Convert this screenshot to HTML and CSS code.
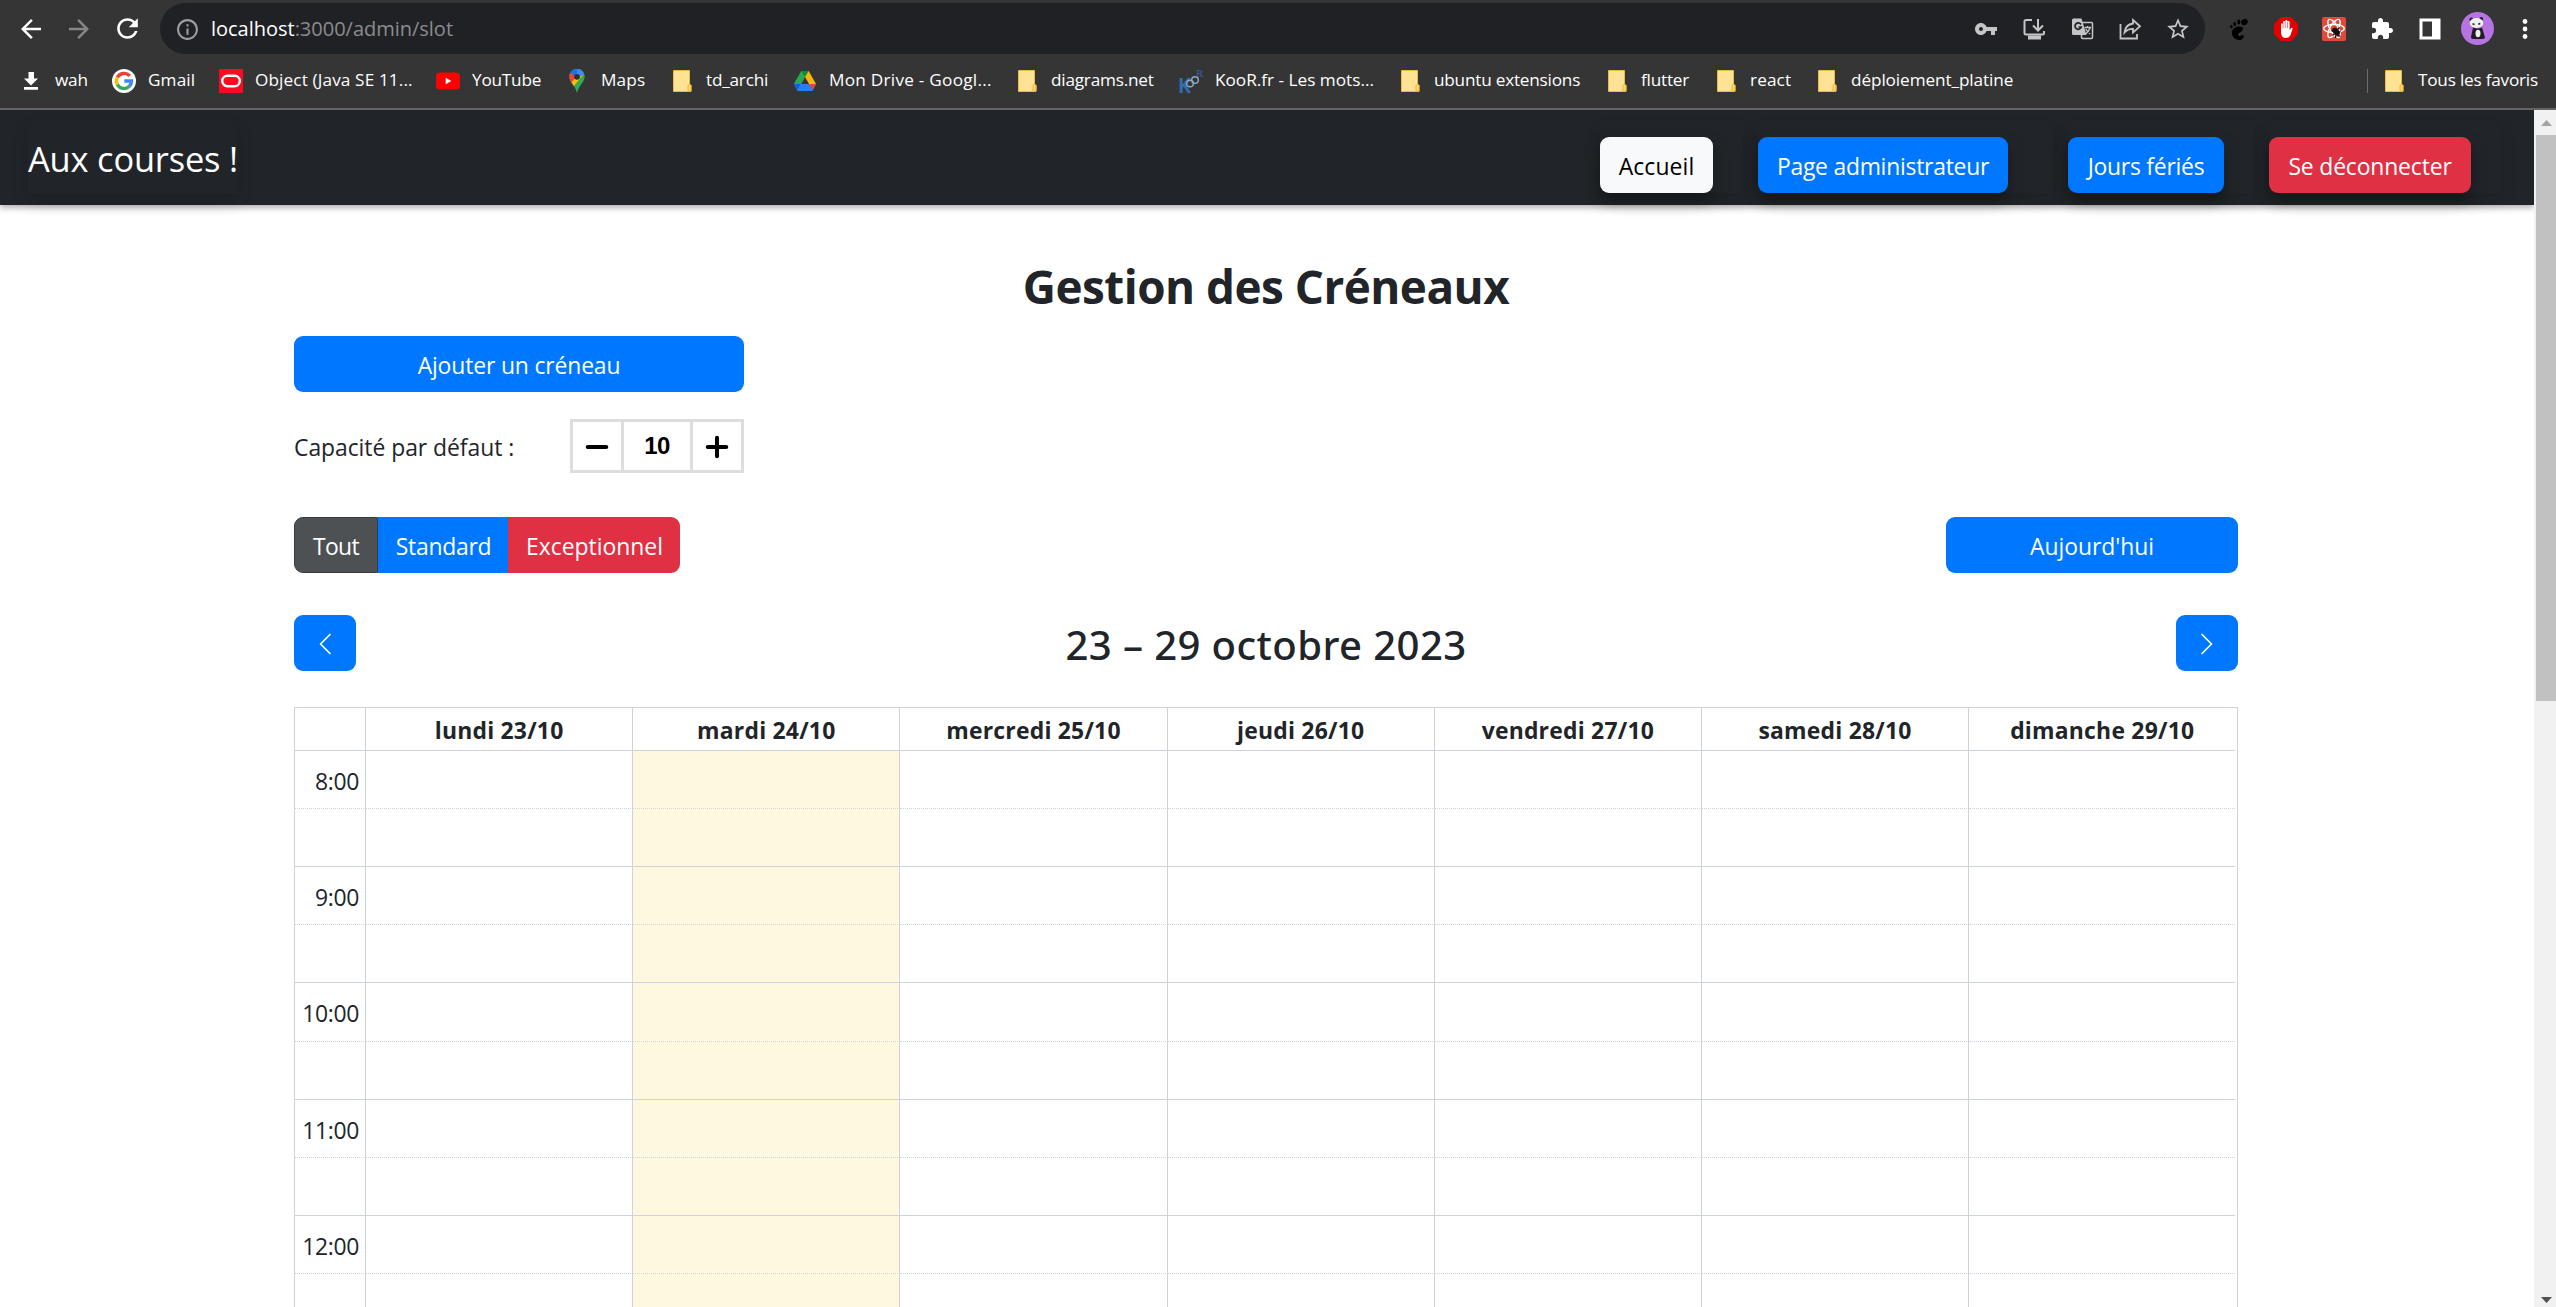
FILE: index.html
```html
<!DOCTYPE html>
<html lang="fr">
<head>
<meta charset="utf-8">
<title>Gestion des Créneaux</title>
<link rel="stylesheet" href="styles.css">
</head>
<body>
<svg class="defs" width="0" height="0">
  <symbol id="folder" viewBox="0 0 24 24">
    <path d="M3.500 1.500h16v14.500h1.500v6.500h-17.500z" fill="#ffe294" stroke="#e9bd43"/>
    <path d="M18 22v-5q0-1.500 1.500-1.500t1.500 1.500v5z" fill="#ffd868" stroke="#e9b93c"/>
  </symbol>
</svg>
<header class="browser">
  <div class="toolbar">
    <div class="nav-icons">
      <svg width="30" height="30" viewBox="0 0 24 24" fill="#fff"><path d="M20 11H7.830l5.590-5.590L12 4l-8 8 8 8 1.410-1.410L7.830 13H20v-2z"/></svg>
      <svg width="30" height="30" viewBox="0 0 24 24" fill="#868686"><path d="M4 11h12.170l-5.590-5.590L12 4l8 8-8 8-1.410-1.410L16.170 13H4v-2z"/></svg>
      <svg width="31" height="31" viewBox="0 0 24 24" fill="#fff"><path d="M17.650 6.350C16.200 4.900 14.210 4 12 4c-4.420 0-7.990 3.580-7.990 8s3.570 8 7.990 8c3.730 0 6.840-2.550 7.730-6h-2.080c-.820 2.330-3.040 4-5.650 4-3.310 0-6-2.690-6-6s2.690-6 6-6c1.660 0 3.140.690 4.220 1.780L13 11h7V4l-2.350 2.350z"/></svg>
    </div>
    <div class="omnibox">
      <svg class="info" width="25" height="25" viewBox="0 0 24 24" fill="#9aa0a6"><path d="M11 7h2v2h-2zm0 4h2v6h-2zm1-9C6.480 2 2 6.480 2 12s4.480 10 10 10 10-4.480 10-10S17.520 2 12 2zm0 18c-4.410 0-8-3.590-8-8s3.590-8 8-8 8 3.590 8 8-3.590 8-8 8z"/></svg>
      <div class="url"><b>localhost</b>:3000/admin/slot</div>
      <div class="omni-icons">
        <svg viewBox="0 0 24 24" fill="#c4c5c6"><path d="M12.650 10C11.830 7.670 9.610 6 7 6c-3.310 0-6 2.690-6 6s2.690 6 6 6c2.610 0 4.830-1.670 5.650-4H17v4h4v-4h2v-4H12.650zM7 14c-1.100 0-2-.900-2-2s.900-2 2-2 2 .900 2 2-.900 2-2 2z"/></svg>
        <svg viewBox="0 0 24 24" fill="none" stroke="#c4c5c6" stroke-width="2"><path d="M10 3H4a1.500 1.500 0 0 0-1.500 1.500v11.500A1.500 1.500 0 0 0 4 17.500h16.500a1.500 1.500 0 0 0 1.500-1.500V14"/><path d="M16 2v11M11 8.500l5 5 5-5"/><path d="M6 20.500h13" stroke-width="4"/></svg>
        <svg viewBox="0 0 24 24"><rect x="11.500" y="5.500" width="11" height="16" rx="1" fill="none" stroke="#c4c5c6" stroke-width="1.500"/><path d="M3.500 1.500h8L16.500 18H3.500a1.500 1.500 0 0 1-1.500-1.500V3a1.500 1.500 0 0 1 1.500-1.500z" fill="#c4c5c6"/><path d="M11 7.500A3.200 3.200 0 1 0 11.300 10H8.500" fill="none" stroke="#202124" stroke-width="1.700"/><path d="M14.500 10.500h6.500M17.500 9v1.500M20 11q-1.500 4-4.500 6M15.800 12q1.700 3.500 4.500 5" fill="none" stroke="#c4c5c6" stroke-width="1.400"/></svg>
        <svg viewBox="0 0 24 24" fill="none" stroke="#c4c5c6" stroke-width="2"><path d="M2.500 7v14.500H19V17" stroke-width="1.800"/><path d="M15 3l7 6.300-7 6.200v-3.700c-4 0-6.500 1.200-8.500 3.700.500-5 3.500-8.300 8.500-9z" stroke-width="1.800"/></svg>
        <svg class="star" viewBox="0 0 24 24" fill="#c4c5c6"><path d="M22 9.240l-7.190-.620L12 2 9.190 8.630 2 9.240l5.460 4.730L5.820 21 12 17.270 18.180 21l-1.630-7.030L22 9.240zM12 15.400l-3.760 2.270 1-4.280-3.320-2.880 4.380-.380L12 6.100l1.710 4.040 4.380.380-3.320 2.880 1 4.280L12 15.400z"/></svg>
      </div>
    </div>
    <div class="ext-icons">
      <svg viewBox="0 0 24 24" fill="#000"><ellipse cx="18.500" cy="5" rx="3.400" ry="2.900" transform="rotate(-35 18.500 5)"/><ellipse cx="12.800" cy="5" rx="1.600" ry="2.400"/><ellipse cx="8.700" cy="7" rx="1.400" ry="2.100" transform="rotate(-10 8.700 7)"/><ellipse cx="5.300" cy="9.700" rx="1.200" ry="1.800" transform="rotate(-20 5.300 9.700)"/><path d="M17 10.500c-5-2.500-11 .500-11 5.500 0 4 3.500 7 7 7 3 0 5-2 5-4.500l-2.500-.500c-1 1.500-3 1.500-3.500 0-.600-2.500 5.500-2.500 5-7.500z"/></svg>
      <svg viewBox="0 0 24 24"><path d="M7 0h10l7 7v10l-7 7H7l-7-7V7z" fill="#e60000"/><path d="M7 16V7.200a1 1 0 0 1 2 0V5a1.100 1.100 0 0 1 2.200 0V4a1.100 1.100 0 0 1 2.200 0v1a1.100 1.100 0 0 1 2.200 0v8l1.500-2q1-.800 1.700.200L16.500 18Q15 21 12 21q-4.500 0-5-5z" fill="#fff"/><path d="M9.100 6v5.500M11.300 5v6M13.500 5v6" stroke="#e60000" stroke-width=".5"/></svg>
      <svg viewBox="0 0 24 24"><rect width="24" height="24" rx="2" fill="#e04a3a"/><g fill="none" stroke="#fff" stroke-width="1.400"><ellipse cx="12" cy="11.500" rx="10.200" ry="4"/><ellipse cx="12" cy="11.500" rx="10.200" ry="4" transform="rotate(60 12 11.500)"/><ellipse cx="12" cy="11.500" rx="10.200" ry="4" transform="rotate(120 12 11.500)"/></g><ellipse cx="14" cy="14.500" rx="3" ry="4.500" transform="rotate(-45 14 14.500)" fill="#1c1111"/><path d="M9.500 13.500l4 1 4-4M10.500 18.500l3-2.500 5-1.500M13.500 21l.500-4 4.500 2.500" fill="none" stroke="#1c1111" stroke-width="1.300"/></svg>
      <svg viewBox="0 0 24 24" fill="#fff"><path d="M20.500 11H19V7c0-1.100-.900-2-2-2h-4V3.500C13 2.120 11.880 1 10.500 1S8 2.120 8 3.500V5H4c-1.100 0-1.990.900-1.990 2v3.800H3.500c1.490 0 2.700 1.210 2.700 2.700s-1.210 2.700-2.700 2.700H2V20c0 1.100.900 2 2 2h3.800v-1.500c0-1.490 1.210-2.700 2.700-2.700 1.490 0 2.700 1.210 2.700 2.700V22H17c1.100 0 2-.900 2-2v-4h1.500c1.380 0 2.500-1.120 2.500-2.500S21.880 11 20.500 11z"/></svg>
      <svg viewBox="0 0 24 24"><path d="M1.500 1.500h21v21h-21zM4.500 4.500v15h9.500v-15z" fill="#fff" fill-rule="evenodd"/></svg>
      <svg class="avatar" viewBox="0 0 33 33"><circle cx="16.500" cy="16.500" r="16.500" fill="#b873e2"/><circle cx="10.300" cy="7.500" r="1.900" fill="#222"/><circle cx="20.300" cy="7" r="1.900" fill="#222"/><ellipse cx="15.500" cy="11" rx="6.800" ry="5" fill="#f0f0f0"/><path d="M11.500 11.800l2 .700M17.300 12.300l2-.800" stroke="#222" stroke-width="1.500"/><path d="M12 15.500q4.500 2 9 0l3 10q-1 2-4 1.500h-7q-3 0-3-2z" fill="#1d1d22"/><ellipse cx="17" cy="21.500" rx="2.500" ry="3.700" fill="#f0f0f0"/></svg>
      <svg viewBox="0 0 24 24" fill="#fff"><circle cx="12" cy="4.500" r="2.400"/><circle cx="12" cy="12" r="2.400"/><circle cx="12" cy="19.500" r="2.400"/></svg>
    </div>
  </div>
  <nav class="bookmarks">
    <div class="bm"><svg viewBox="0 0 24 24" fill="#fff"><path d="M9.500 3h5.500v6.500h4L12 16.500 5 9.500h4.500zM5 18h14v2.700H5z"/></svg><span class="tight">wah</span></div>
    <div class="bm"><svg viewBox="0 0 24 24"><circle cx="12" cy="12" r="12" fill="#fff"/><g fill="none" stroke-width="3.400"><path d="M17.700 6.900A7.600 7.600 0 0 0 5.300 8.500" stroke="#ea4335"/><path d="M5.300 8.500a7.600 7.600 0 0 0 0 7" stroke="#fbbc05"/><path d="M5.300 15.500a7.600 7.600 0 0 0 11.800 2.100" stroke="#34a853"/><path d="M17.100 17.600A7.600 7.600 0 0 0 19.500 12H12.300" stroke="#4285f4"/></g></svg><span class="wide">Gmail</span></div>
    <div class="bm"><svg viewBox="0 0 24 24"><rect width="24" height="24" fill="#f80c24"/><rect x="3.200" y="6.800" width="17.600" height="10.400" rx="5.200" fill="none" stroke="#fff" stroke-width="2.400"/></svg><span class="wide">Object (Java SE 11...</span></div>
    <div class="bm"><svg viewBox="0 0 24 24"><rect y="3.600" width="24" height="17" rx="4" fill="#f00"/><path d="M9.700 8.700v6.600l5.700-3.300z" fill="#fff"/></svg><span class="tight">YouTube</span></div>
    <div class="bm"><svg viewBox="0 0 24 24"><clipPath id="pin"><path d="M12 0C7.500 0 4.300 3.500 4.300 7.600c0 5.500 5 7.400 7.700 16.400 2.700-9 7.700-10.900 7.700-16.400C19.700 3.500 16.500 0 12 0z"/></clipPath><g clip-path="url(#pin)"><path d="M0 0h24v24H0z" fill="#34a853"/><path d="M0 0h24L3 16z" fill="#1a73e8"/><path d="M4 3l8 5-6 7-4-7z" fill="#ea4335"/><path d="M5 15L16 3l2 3L8 18z" fill="#fbbc04"/><path d="M12 0h8v5l-8 4z" fill="#4285f4"/></g><circle cx="12" cy="7.800" r="2.900" fill="#263238"/></svg><span class="wide">Maps</span></div>
    <div class="bm"><svg><use href="#folder"/></svg><span class="tight">td_archi</span></div>
    <div class="bm"><svg viewBox="0 0 24 24"><path d="M8.300 2h7.400l-3.700 6-5.500 12L1 14.500z" fill="#28a850"/><path d="M8.300 2h7.400L12 8z" fill="#0f8a3c"/><path d="M15.700 2L23 15h-7L12 8z" fill="#fbb40a"/><path d="M1 15h22l-3.500 7h-15z" fill="#2680f0"/><path d="M16 15h7l-3.500 6z" fill="#e94235"/><path d="M1 15h6.500l-3 6z" fill="#1560d0"/><path d="M12 9l3.500 6h-7z" fill="#353535"/></svg><span class="wider">Mon Drive - Googl...</span></div>
    <div class="bm"><svg><use href="#folder"/></svg><span class="tight">diagrams.net</span></div>
    <div class="bm koor"><svg viewBox="0 0 24 24"><text x="-1" y="23.500" font-size="22" font-weight="700" textLength="13" lengthAdjust="spacingAndGlyphs" fill="#2f6cb0">K</text><circle cx="11" cy="14.500" r="3.300"/><circle cx="16" cy="11" r="3.300"/><text x="17" y="8" font-size="11" class="serif" fill="#3a62a0">R</text></svg><span>KooR.fr - Les mots...</span></div>
    <div class="bm"><svg><use href="#folder"/></svg><span class="tight">ubuntu extensions</span></div>
    <div class="bm"><svg><use href="#folder"/></svg><span class="tight">flutter</span></div>
    <div class="bm"><svg><use href="#folder"/></svg><span class="wide">react</span></div>
    <div class="bm"><svg><use href="#folder"/></svg><span class="snug">déploiement_platine</span></div>
    <div class="bm all"><svg><use href="#folder"/></svg><span class="tight">Tous les favoris</span></div>
  </nav>
</header>

<div class="viewport">
  <div class="page">
    <nav class="navbar">
      <a class="brand">Aux courses !</a>
      <ul class="menu">
        <li class="w-home"><a class="btn light">Accueil</a></li>
        <li class="w-admin"><a class="btn blue">Page administrateur</a></li>
        <li class="w-days"><a class="btn blue">Jours fériés</a></li>
        <li class="w-out"><a class="btn red">Se déconnecter</a></li>
      </ul>
    </nav>
    <main>
      <h1>Gestion des Créneaux</h1>
      <button class="btn blue add">Ajouter un créneau</button>
      <div class="capacity">
        <span>Capacité par défaut :</span>
        <div class="stepper">
          <div class="step"><svg viewBox="0 0 22 22"><path d="M2.500 11h17"/></svg></div>
          <div class="value">10</div>
          <div class="step"><svg viewBox="0 0 22 22"><path d="M2.500 11h17M11 2.500v17"/></svg></div>
        </div>
      </div>
      <div class="filters">
        <div class="group">
          <button class="btn dark">Tout</button><button class="btn blue std">Standard</button><button class="btn red exc">Exceptionnel</button>
        </div>
        <button class="btn blue today-btn">Aujourd'hui</button>
      </div>
      <div class="week">
        <button class="btn blue arrow"><svg viewBox="0 0 24 24"><path d="M17 2.500L7.500 12l9.500 9.500"/></svg></button>
        <h2>23 – 29 octobre 2023</h2>
        <button class="btn blue arrow"><svg viewBox="0 0 24 24"><path d="M7 2.500l9.500 9.500L7 21.500"/></svg></button>
      </div>
      <div class="calendar">
        <div class="row head"><div></div><div>lundi 23/10</div><div>mardi 24/10</div><div>mercredi 25/10</div><div>jeudi 26/10</div><div>vendredi 27/10</div><div>samedi 28/10</div><div>dimanche 29/10</div></div>
        <div class="row half"><div class="time">8:00</div><div></div><div class="now"></div><div></div><div></div><div></div><div></div><div></div></div>
        <div class="row"><div></div><div></div><div class="now"></div><div></div><div></div><div></div><div></div><div></div></div>
        <div class="row half"><div class="time">9:00</div><div></div><div class="now"></div><div></div><div></div><div></div><div></div><div></div></div>
        <div class="row"><div></div><div></div><div class="now"></div><div></div><div></div><div></div><div></div><div></div></div>
        <div class="row half"><div class="time">10:00</div><div></div><div class="now"></div><div></div><div></div><div></div><div></div><div></div></div>
        <div class="row"><div></div><div></div><div class="now"></div><div></div><div></div><div></div><div></div><div></div></div>
        <div class="row half"><div class="time">11:00</div><div></div><div class="now"></div><div></div><div></div><div></div><div></div><div></div></div>
        <div class="row"><div></div><div></div><div class="now"></div><div></div><div></div><div></div><div></div><div></div></div>
        <div class="row half"><div class="time">12:00</div><div></div><div class="now"></div><div></div><div></div><div></div><div></div><div></div></div>
        <div class="row"><div></div><div></div><div class="now"></div><div></div><div></div><div></div><div></div><div></div></div>
      </div>
    </main>
  </div>
  <div class="scrollbar">
    <svg width="22" height="25" viewBox="0 0 22 25"><path d="M7 16l5.500-6 5.500 6z" fill="#a3a3a3"/></svg>
    <div class="thumb"></div>
    <svg class="down" width="22" height="16" viewBox="0 0 22 16"><path d="M7 6l5.500 6L18 6z" fill="#505050"/></svg>
  </div>
</div>
</body>
</html>
```
FILE: styles.css
```css
* { box-sizing: border-box; }
html, body { margin: 0; height: 100%; overflow: hidden; }
body {
  display: flex;
  flex-direction: column;
  height: 1307px;
  font: 22.92px/36px "Open Sans", "Noto Sans", sans-serif;
  letter-spacing: -.15px;
  color: #212529;
  background: #fff;
  white-space: nowrap;
}
svg { display: block; flex: none; }
.defs { position: absolute; }

/* Browser window */
.browser { flex: none; height: 110px; background: #353535; border-bottom: 2px solid #646464; }
.toolbar { display: flex; height: 54px; padding-top: 3px; align-items: center; }
.nav-icons { display: flex; align-items: center; gap: 18px; width: 160px; padding-left: 16px; }
.omnibox { display: flex; align-items: center; width: 2045px; height: 51px; border-radius: 26px; background: #202124; padding: 0 15px; }
.info { position: relative; top: 1px; }
.url { flex: 1; margin-left: 11px; font-size: 20.05px; letter-spacing: -.03px; color: #8a8c8f; }
.url b { font-weight: 400; color: #fff; }
.omni-icons { display: flex; align-items: center; gap: 24px; }
.omni-icons svg { width: 24px; height: 24px; }
.omni-icons .star { width: 26px; height: 26px; margin: 0 -1px; }
.ext-icons { display: flex; align-items: center; gap: 24px; margin-left: 21px; }
.ext-icons svg { width: 24px; height: 24px; }
.ext-icons .avatar { width: 33px; height: 33px; margin: 0 -5px; }

.bookmarks {
  display: grid;
  grid-template-columns: 93px 107px 217px 129px 105px 123px 222px 164px 219px 207px 109px 101px 552px auto;
  align-items: center;
  height: 54px;
  padding-left: 19px;
  font-size: 17.2px;
  letter-spacing: 0;
  color: #fff;
}
.bm { display: flex; align-items: center; gap: 12px; height: 24px; }
.bm svg { width: 24px; height: 24px; }
.bm span { position: relative; top: -1px; }
.bm .tight { letter-spacing: -.22px; }
.bm .snug { letter-spacing: -.1px; }
.bm .wide { letter-spacing: .12px; }
.bm .wider { letter-spacing: .25px; }
.koor svg { overflow: visible; }
.koor circle { fill: none; stroke: #8fa9c8; stroke-width: 1.4; }
.serif { font-family: "Liberation Serif", serif; }
.all { border-left: 1px solid #6b6b6b; padding-left: 14px; }

/* Page */
.viewport { flex: 1; display: flex; min-height: 0; }
.page { width: 2534px; overflow: hidden; }
.scrollbar { width: 22px; background: #f1f1f1; display: flex; flex-direction: column; }
.thumb { height: 566px; margin-left: 2px; background: #c1c1c1; }
.down { margin-top: auto; }

.navbar {
  display: flex;
  justify-content: space-between;
  align-items: flex-start;
  height: 95px;
  padding: 12px 33px 0 28px;
  background: #212529;
  box-shadow: 0 3px 6px rgba(0, 0, 0, .3);
}
.brand {
  width: 209px;
  height: 72px;
  padding-top: 1px;
  font-size: 34.4px;
  line-height: 72px;
  letter-spacing: -.17px;
  color: #fff;
  box-shadow: 0 8px 16px rgba(0, 0, 0, .15);
}
.menu { display: flex; gap: 15px; margin: 0; padding: 0; list-style: none; }
.menu li { height: 71px; padding-top: 15px; box-shadow: 0 8px 16px rgba(0, 0, 0, .1); }
.menu .btn { width: max-content; box-shadow: 0 8px 16px rgba(0, 0, 0, .35); }
.w-home { width: 143px; }
.w-admin { width: 295px; }
.w-days { width: 186px; }
.w-out { width: 232px; }
.w-home .btn { width: 113px; letter-spacing: .1px; }
.w-admin .btn { width: 250px; letter-spacing: -.25px; }
.w-days .btn { width: 156px; letter-spacing: -.25px; }
.w-out .btn { width: 202px; }

.btn {
  display: flex;
  align-items: center;
  justify-content: center;
  height: 56px;
  padding: 4px 0 0;
  border: 0;
  border-radius: 9px;
  font: inherit;
  letter-spacing: -.15px;
  color: #fff;
}
.blue { background: #0077ff; }
.red { background: #e03144; }
.light { background: #f8f9fa; color: #000; }
.dark { background: #4d5154; border: 1px solid #373b3e; }

main { display: flex; flex-direction: column; width: 1944px; margin-left: 294px; }
h1 { margin: 52px 0 0; font-size: 45.84px; line-height: 58px; letter-spacing: -.52px; text-align: center; }
.add { width: 450px; margin-top: 21px; }
.capacity { display: flex; align-items: center; justify-content: space-between; width: 450px; margin-top: 27px; letter-spacing: -.05px; }
.capacity > span { position: relative; top: 2px; }
.stepper { display: flex; height: 54px; border: 3px solid #ddd; color: #000; }
.step { width: 48px; display: flex; align-items: center; justify-content: center; }
.step svg { width: 24px; height: 24px; fill: none; stroke: #000; stroke-width: 3.7; stroke-linecap: round; position: relative; top: 1px; }
.value { width: 72px; border: solid #ddd; border-width: 0 3px; text-align: center; font: 700 24px/48px "Liberation Sans", Arial, sans-serif; letter-spacing: -.5px; }
.filters { display: flex; justify-content: space-between; margin-top: 44px; }
.group { display: flex; }
.group .dark { width: 84px; border-radius: 9px 0 0 9px; letter-spacing: -.6px; }
.group .std { width: 130px; border-radius: 0; letter-spacing: -.25px; padding-left: 1px; }
.group .exc { width: 172px; border-radius: 0 9px 9px 0; letter-spacing: -.02px; padding-left: 1px; }
.today-btn { width: 292px; letter-spacing: -.05px; }
.week { display: flex; justify-content: space-between; align-items: center; height: 56px; margin-top: 42px; }
.week h2 { margin: 0 0 -3px; font: 500 40.1px/56px "Noto Sans", "Open Sans", sans-serif; letter-spacing: .4px; }
.arrow { width: 62px; padding-top: 2px; }
.arrow svg { width: 24px; height: 24px; fill: none; stroke: #fff; stroke-width: 1.7; stroke-linecap: round; stroke-linejoin: round; }

.calendar { margin-top: 36px; border: 1px solid #ced2da; border-bottom: 0; }
.row { display: grid; grid-template-columns: 71px repeat(7, 267.2px); height: 58.2px; }
.row > div { border: 0 solid #ced2da; border-width: 0 1px 1px 0; }
.row > div:last-child { border-right: 0; margin-right: 1px; }
.half > div { border-bottom-style: dotted; }
.head { height: 42.6px; font-weight: 700; line-height: 46px; letter-spacing: .22px; text-align: center; }
.head > div { height: 42.6px; }
.time { padding: 13px 6px 0 0; text-align: right; letter-spacing: -.33px; }
.now { background: #fff8e1; }
```
